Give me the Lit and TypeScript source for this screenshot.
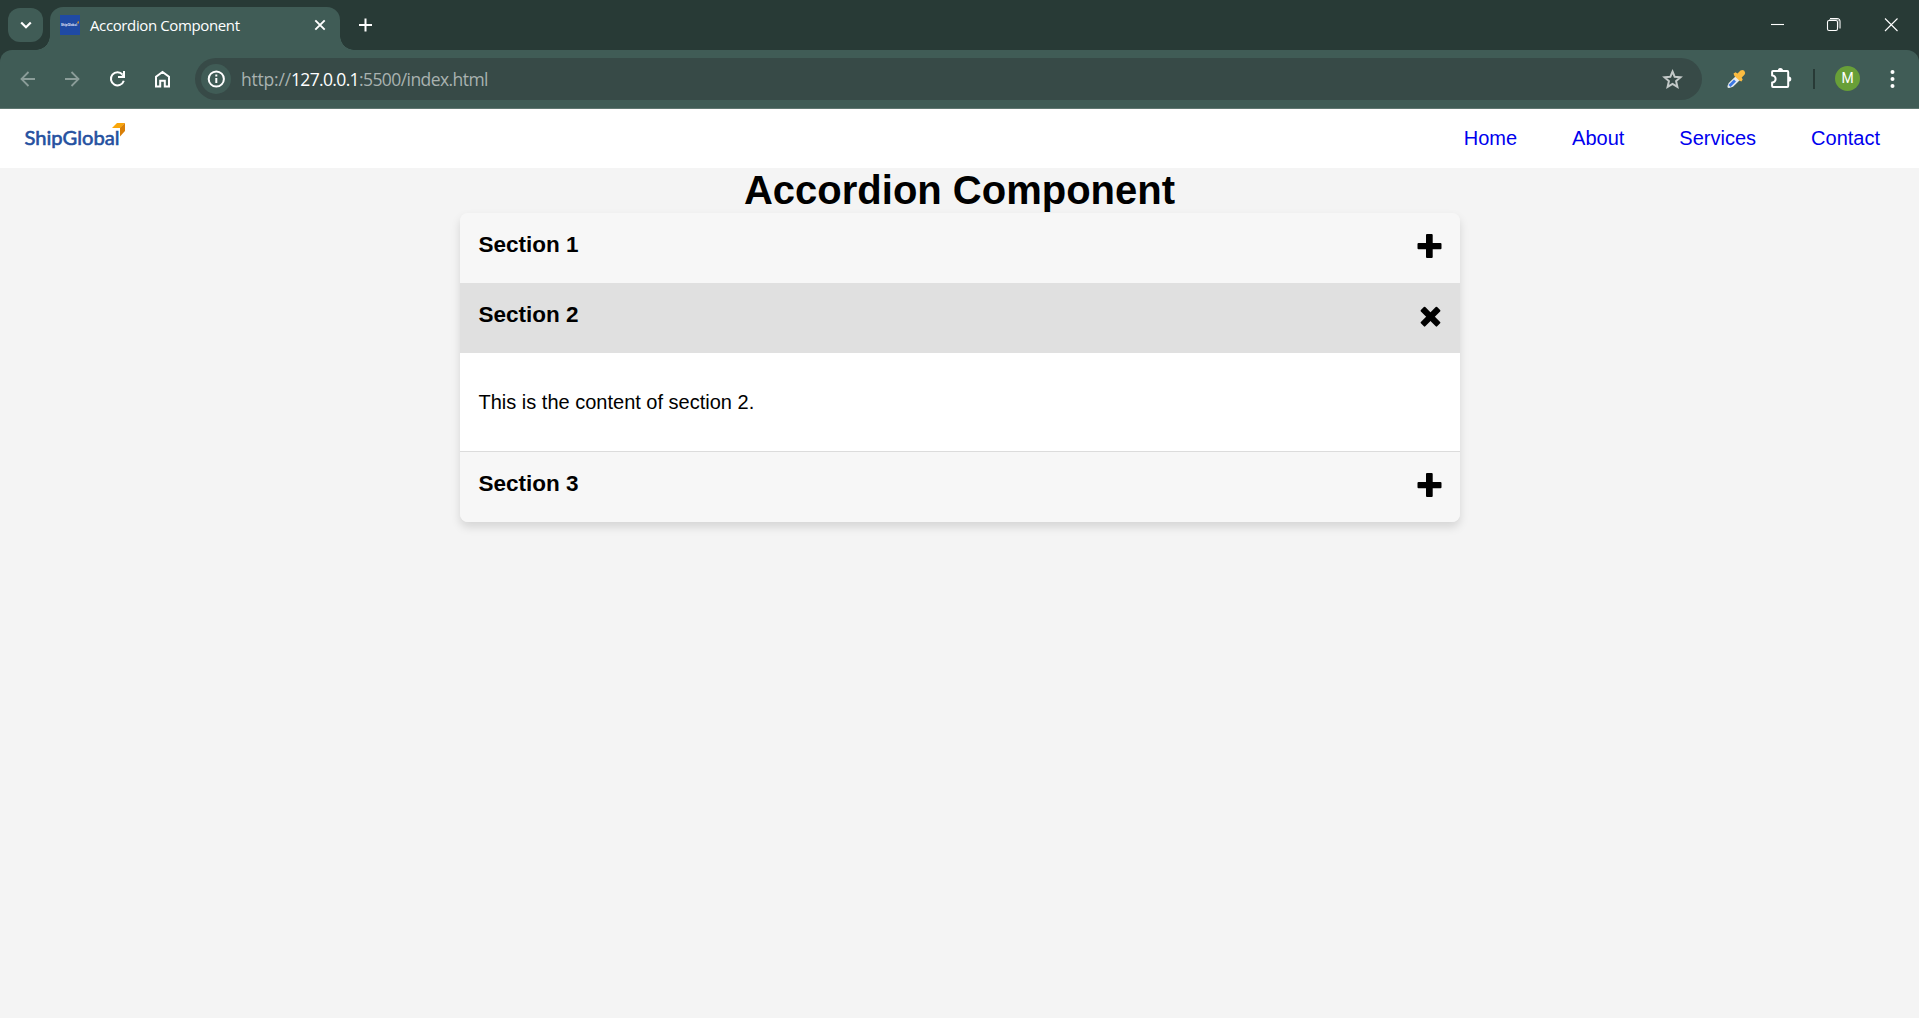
import { LitElement, html, css, svg, nothing } from "lit";
import { customElement, property, state } from "lit/decorators.js";

@customElement("browser-frame")
class BrowserFrame extends LitElement {
  static styles = css`
    :host { display: block; font-family: "Open Sans", "Noto Sans", sans-serif; background: #283a36; }
    svg { display: block; flex: none; }
    .strip { display: flex; height: 50px; box-sizing: border-box; padding: 7px 0 0 8px; color: #fff; }
    .search { width: 35px; height: 34px; margin-top: 1px; border-radius: 12px; background: #405c56; display: flex; }
    .tab { position: relative; box-sizing: border-box; margin-left: 7px; width: 290px; height: 43px; padding: 0 13px 7px 10px; border-radius: 13px 13px 0 0; background: #405c56; display: flex; align-items: center; }
    .flare { position: absolute; bottom: 0; width: 14px; height: 14px; }
    .flare.left { left: -14px; background: radial-gradient(circle at 0 0, transparent 13.5px, #405c56 14px); }
    .flare.right { right: -14px; background: radial-gradient(circle at 100% 0, transparent 13.5px, #405c56 14px); }
    .favicon { width: 20px; height: 20px; }
    .title { flex: 1; margin-left: 10px; font-size: 15px; line-height: 20px; white-space: nowrap; letter-spacing: -0.38px; padding-bottom: 1px; }
    .plus { margin: 11px 0 0 18px; }
    .window { display: flex; margin-left: auto; padding: 10px 21px 0 0; height: 16px; align-items: center; }
    .bar { display: flex; align-items: center; height: 59px; box-sizing: border-box; padding: 0 0 1px; background: #405c56; border-bottom: 1px solid #5f7771; border-radius: 12px 12px 0 0; }
    .nav { display: flex; width: 195px; flex: none; }
    .address { box-sizing: border-box; width: 1507px; height: 42px; border-radius: 21px; background: #374a47; display: flex; align-items: center; padding: 0 15px 0 6px; }
    .info { width: 30px; height: 30px; border-radius: 50%; background: #405c56; display: flex; flex: none; }
    .url { flex: 1; margin-left: 10px; font-size: 17.5px; line-height: 24px; color: #a9b2b0; white-space: nowrap; letter-spacing: -0.2px; }
    .host { color: #fff; letter-spacing: -0.65px; }
    .path { letter-spacing: -0.57px; }
    .tools { display: flex; align-items: center; flex: 1; }
    .extensions { margin-left: 14px; }
    .divider { width: 2px; height: 20px; background: #283a36; margin-left: 13px; }
    .avatar { width: 25px; height: 25px; border-radius: 50%; background: #689f38; color: #fff; font: 14px/25px Roboto, sans-serif; text-align: center; margin-left: 20px; }
    .menu { margin-left: 27px; }
  `;
  render() {
    return html`
      <div class="strip">
        <div class="search"><svg width="35" height="34" fill="none" stroke="#fff" stroke-width="2.2"><path d="M13.2 14.5l4.8 4.8 4.8-4.8"/></svg></div>
        <div class="tab">
          <span class="flare left"></span><span class="flare right"></span>
          <svg class="favicon" viewBox="0 0 20 20"><path fill="#1f4aa3" d="M0 0h20v20H0z"/><text x="1" y="10.6" font-size="4" font-weight="700" font-family="Lato, sans-serif" fill="#e9eefa" textLength="16" lengthAdjust="spacingAndGlyphs">ShipGlobal</text><path fill="#b98b3c" d="M17 7l2-1v2l-1 1z"/></svg>
          <div class="title">Accordion Component</div>
          <svg width="14" height="14" fill="none" stroke="#fff" stroke-width="1.9"><path d="M2.3 2.3l9.4 9.4m0-9.4l-9.4 9.4"/></svg>
        </div>
        <svg class="plus" width="14" height="14" fill="none" stroke="#fff" stroke-width="2"><path d="M7.5.5v13M1 7h13"/></svg>
        <div class="window">
          <svg width="150" height="16" viewBox="0 0 150 16" fill="none" stroke="#fff" stroke-width="1.1"><path d="M23 7.5h13"/><rect x="79.5" y="3.5" width="10" height="10" rx="1.6"/><path d="M82 1.5h7a3 3 0 0 1 3 3v7"/><path stroke="#8c9794" stroke-width="1" d="M81 2.5h8q2 0 2 2v6"/><path d="M137 1.5l12.5 12.5m0-12.5l-12.5 12.5"/></svg>
        </div>
      </div>
      <div class="bar">
        <svg class="nav" width="195" height="30" viewBox="0 0 195 30" fill="none" stroke="#fff" stroke-width="2">
          <g stroke="#8b9d99" stroke-width="1.8"><path d="M35 15H21.5m7-7l-7 7 7 7M65 15h13.500m-7-7l7 7-7 7"/></g>
          <path stroke-width="2" d="M122.600 10.600a6.600 6.600 0 1 0 1.200 6.200"/><path fill="#fff" stroke="none" d="M125 7v7h-7v-2h3.400l1.600-1.600V7z"/>
          <path stroke-width="2" d="M156 22.500v-9.700l6.500-4.900 6.500 4.900v9.700h-4.200v-5.700h-4.600v5.700z"/>
        </svg>
        <div class="address">
          <div class="info"><svg width="30" height="30" fill="none" stroke="#fff" stroke-width="2"><circle cx="15.300" cy="15" r="7.600"/><path d="M15.300 14v5M15.300 10.500v2"/></svg></div>
          <div class="url">http://<span class="host">127.0.0.1</span><span class="path">:5500/index.html</span></div>
          <svg width="28" height="28" fill="none" stroke="#c3c9c8" stroke-width="2"><path d="M13.500 6.500l2.200 5.300 5.800.5-4.400 3.800 1.300 5.700-4.900-3-4.900 3 1.300-5.700-4.400-3.800 5.800-.5z"/></svg>
        </div>
        <div class="tools">
          <svg class="extensions" width="84" height="30" viewBox="0 0 84 30" fill="none">
            <path fill="#e6ebee" d="M20.500 11.500l4 4-7.500 7.300-4 1.200q-2 .2-1.500-2l1.200-3z"/><path stroke="#3b78e7" stroke-width="2.800" d="M13.500 22l5.500-5.500"/>
            <path fill="#fbbc41" d="M17.500 9.500l2-1.300 2 1.300 3-3q2-1.300 3.800.2 1.500 2 .2 4l-2.800 2.900 1 2-1.300 2-2.200-1.100-4.800-4.600z"/>
            <path stroke="#fff" stroke-width="2" stroke-linejoin="round" d="M57 7h14.300q.9 0 .9.900v14.200q0 .9-.9.900H57q-.9 0-.9-.9V18.500a3.500 3.500 0 0 0 0-7V7.900q0-.9.900-.9z"/>
            <path fill="#fff" d="M61.800 6.500a2.600 2.600 0 0 1 5.200 0zM72.700 12.400a2.600 2.600 0 0 1 0 5.200z"/>
          </svg>
          <div class="divider"></div>
          <div class="avatar">M</div>
          <svg class="menu" width="10" height="20" fill="#fff"><circle cx="5.500" cy="3" r="2"/><circle cx="5.500" cy="10" r="2"/><circle cx="5.500" cy="17" r="2"/></svg>
        </div>
      </div>`;
  }
}

@customElement("site-header")
class SiteHeader extends LitElement {
  static styles = css`
    :host { display: flex; justify-content: space-between; align-items: center; box-sizing: border-box; height: 59px; padding: 0 39px 0 24px; background: #fff; }
    .links { display: flex; gap: 55px; }
    a { color: #0000ee; font-size: 20px; line-height: 23px; text-decoration: none; }
  `;
  render() {
    return html`
      <svg width="104" height="34" viewBox="0 0 104 34">
        <text x="0.500" y="22.800" font-family="Lato, sans-serif" font-size="20" fill="#2450a0" stroke="#2450a0" stroke-width=".6" textLength="95" lengthAdjust="spacingAndGlyphs">ShipGlobal</text>
        <path fill="#f9a60a" d="M93 1h8l-4.500 5H88z"/><path fill="#d97f08" d="M101 1v8l-5 5.500V6z"/>
      </svg>
      <nav class="links">${["Home", "About", "Services", "Contact"].map((t) => html`<a href="#">${t}</a>`)}</nav>`;
  }
}

@customElement("accordion-item")
class AccordionItem extends LitElement {
  @property() heading = "";
  @property() text = "";
  @property({ type: Boolean }) open = false;
  static styles = css`
    :host { display: block; }
    .head { display: flex; justify-content: space-between; box-sizing: border-box; height: 70px; padding: 19px 18px 0 19px; background: #f7f7f7; cursor: pointer; }
    .head.open { background: #e0e0e0; }
    h3 { margin: 0; font-size: 22.500px; line-height: 26px; font-weight: 700; }
    svg { display: block; margin-top: 2px; }
    .body { box-sizing: border-box; height: 99px; padding: 38px 19px 0; background: #fff; border-bottom: 1px solid #dcdcdc; }
    p { margin: 0; font-size: 20px; line-height: 23px; }
  `;
  render() {
    return html`
      <div class="head ${this.open ? "open" : ""}">
        <h3>${this.heading}</h3>
        <svg width="25" height="26" viewBox="0 0 25 26">${this.open
          ? svg`<g transform="rotate(45 13.500 12.700)"><rect x="2" y="9.600" width="23" height="6.200" rx="1"/><rect x="10.400" y="1.200" width="6.200" height="23" rx="1"/></g>`
          : svg`<path fill="#000" d="M10 0h4.700q1 0 1 1v8h7.800q1 0 1 1v4.200q0 1-1 1h-7.800V23q0 1-1 1H10q-1 0-1-1v-7.800H1.500q-1 0-1-1V10q0-1 1-1H9V1q0-1 1-1z"/>`}</svg>
      </div>
      ${this.open ? html`<div class="body"><p>${this.text}</p></div>` : nothing}`;
  }
}

@customElement("app-root")
class AppRoot extends LitElement {
  @state() private active = 2;
  static styles = css`
    :host { display: block; height: 1018px; overflow: hidden; background: #f4f4f4; color: #000; font-family: "Liberation Sans", Arial, sans-serif; }
    h1 { margin: 0; height: 45px; font-size: 40px; line-height: 45px; text-align: center; }
    .accordion { border-radius: 8px; overflow: hidden; }
    .shadow { width: 1000px; margin: 0 auto; border-radius: 8px; box-shadow: 0 5px 10px rgba(0, 0, 0, 0.13); }
  `;
  render() {
    return html`
      <browser-frame></browser-frame>
      <site-header></site-header>
      <h1>Accordion Component</h1>
      <div class="shadow"><div class="accordion">
        ${[1, 2, 3].map((n) => html`<accordion-item
          heading="Section ${n}" text="This is the content of section ${n}." ?open=${this.active === n}
          @click=${() => (this.active = this.active === n ? 0 : n)}></accordion-item>`)}
      </div></div>`;
  }
}
